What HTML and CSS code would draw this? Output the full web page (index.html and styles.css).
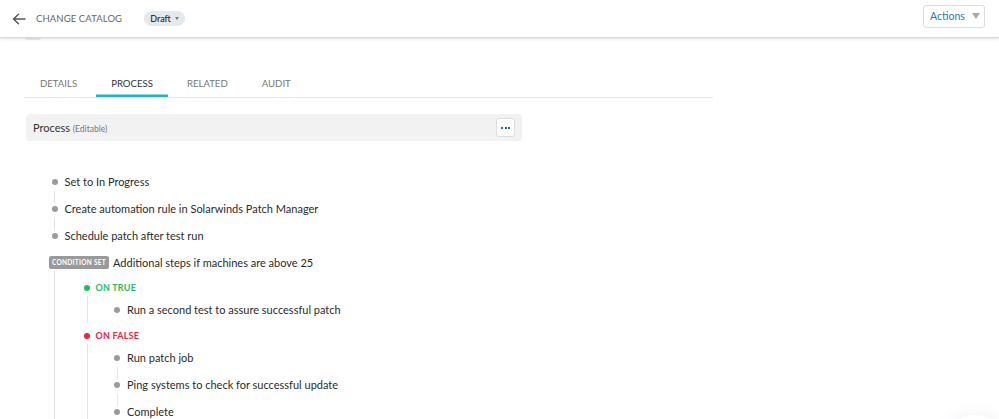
FILE: index.html
```html
<!DOCTYPE html>
<html>
<head>
<meta charset="utf-8">
<link rel="stylesheet" href="styles.css">
</head>
<body>
<header class="topbar">
  <div class="topbar-left">
    <svg class="back" width="14" height="12" viewBox="0 0 14 12"><path d="M13 6H1.8M6.5 1.2L1.5 6l5 4.8" fill="none" stroke="#555" stroke-width="1.4" stroke-linecap="round" stroke-linejoin="round"/></svg>
    <span class="title">CHANGE CATALOG</span>
    <span class="pill">Draft <span class="pill-caret"></span></span>
  </div>
  <button class="actions">Actions <span class="actions-caret"></span></button>
</header>
<div class="stub"></div>
<main class="content">
  <nav class="tabs">
    <span class="tab">DETAILS</span>
    <span class="tab active">PROCESS</span>
    <span class="tab">RELATED</span>
    <span class="tab">AUDIT</span>
  </nav>
  <div class="panel">
    <div class="panel-title">Process <span class="muted">(Editable)</span></div>
    <button class="more"><span></span><span></span><span></span></button>
  </div>
  <div class="flow">
    <div class="step"><span class="dot"></span>Set to In Progress</div>
    <div class="step"><span class="dot"></span>Create automation rule in Solarwinds Patch Manager</div>
    <div class="step"><span class="dot"></span>Schedule patch after test run</div>
    <div class="cond"><span class="badge">CONDITION SET</span>Additional steps if machines are above 25</div>
    <div class="branches">
      <div class="branch">
        <div class="branch-label true"><span class="bdot"></span>ON TRUE</div>
        <div class="children">
          <div class="step"><span class="dot"></span>Run a second test to assure successful patch</div>
        </div>
      </div>
      <div class="branch">
        <div class="branch-label false"><span class="bdot"></span>ON FALSE</div>
        <div class="children">
          <div class="step"><span class="dot"></span>Run patch job</div>
          <div class="step"><span class="dot"></span>Ping systems to check for successful update</div>
          <div class="step"><span class="dot"></span>Complete</div>
        </div>
      </div>
    </div>
  </div>
</main>
<div class="fab"></div>
</body>
</html>
```
FILE: styles.css
```css
html, body {
  margin: 0;
  padding: 0;
  background: #fff;
  font-family: Lato, "Open Sans", Arial, sans-serif;
  color: #333;
  overflow: hidden;
  height: 419px;
}
.topbar {
  height: 38px;
  box-sizing: border-box;
  display: flex;
  align-items: center;
  justify-content: space-between;
  padding: 0 14px 0 12px;
  border-bottom: 1px solid #d8d8d8;
  box-shadow: 0 1px 3px rgba(0,0,0,0.12);
  position: relative;
  z-index: 2;
}
.topbar-left {
  display: flex;
  align-items: center;
}
.back {
  display: block;
  margin-top: 1px;
}
.title {
  margin-left: 10px;
  font-size: 9.5px;
  color: #666;
  letter-spacing: 0.1px;
}
.pill {
  margin-left: 22px;
  height: 15px;
  padding: 0 6px 0 6px;
  border-radius: 8px;
  background: #e3e9ee;
  font-size: 9px;
  color: #333;
  display: inline-flex;
  align-items: center;
  font-weight: 600;
}
.pill-caret {
  width: 0;
  height: 0;
  margin-left: 4px;
  border-left: 2.5px solid transparent;
  border-right: 2.5px solid transparent;
  border-top: 3px solid #777;
}
.actions {
  height: 23px;
  width: 62px;
  padding: 0 0 0 6px;
  margin-top: -5px;
  background: #fff;
  border: 1px solid #dcdcdc;
  border-radius: 3px;
  font-family: inherit;
  font-size: 10.5px;
  color: #2a77b3;
  display: flex;
  align-items: center;
}
.actions-caret {
  width: 0;
  height: 0;
  margin-left: 7px;
  border-left: 4px solid transparent;
  border-right: 4px solid transparent;
  border-top: 6px solid #a9a9a9;
}
.stub {
  margin-left: 25px;
  width: 16px;
  height: 2px;
  background: #ececec;
  border-radius: 0 0 3px 3px;
}
.content {
  padding: 30px 0 0 25px;
  width: 688px;
}
.tabs {
  display: flex;
  gap: 4px;
  height: 27px;
  border-bottom: 1px solid #e6e6e6;
}
.tab {
  padding: 0 15px;
  font-size: 9.6px;
  color: #777;
  line-height: 27px;
  box-sizing: border-box;
  height: 27px;
}
.tab.active {
  color: #333;
  box-shadow: inset 0 -2.5px 0 #1cb3c8;
}
.panel {
  margin: 16px 0 0 1px;
  width: 496px;
  height: 27px;
  box-sizing: border-box;
  background: #f2f2f2;
  border-radius: 4px;
  display: flex;
  align-items: center;
  justify-content: space-between;
  padding: 0 7px;
}
.panel-title {
  font-size: 11px;
  color: #333;
}
.muted {
  font-size: 8.5px;
  color: #777;
}
.more {
  width: 19px;
  height: 19px;
  padding: 0;
  background: #fff;
  border: 1px solid #dddddd;
  border-radius: 3px;
  display: flex;
  align-items: center;
  justify-content: center;
  gap: 1.5px;
}
.more span {
  width: 2px;
  height: 2px;
  background: #1f6ea8;
}
.flow {
  margin-top: 27px;
  padding-left: 26px;
  font-size: 11px;
  color: #2b2b2b;
}
.step {
  position: relative;
  display: flex;
  align-items: center;
  height: 27px;
}
.step + .step::before {
  content: "";
  position: absolute;
  left: 3px;
  top: -4px;
  width: 1px;
  height: 12px;
  background: #e4e4e4;
}
.dot {
  width: 6px;
  height: 6px;
  border-radius: 50%;
  background: #9b9b9b;
  margin: 0 7px 0 0.5px;
  flex: none;
}
.cond {
  display: flex;
  align-items: center;
  height: 27px;
  margin-left: -2px;
}
.badge {
  background: #9a9a9a;
  color: #fff;
  font-size: 6.5px;
  font-weight: 700;
  letter-spacing: 0.3px;
  height: 13px;
  line-height: 13px;
  width: 60px;
  text-align: center;
  border-radius: 2px;
  margin-right: 4px;
}
.branches {
  margin-left: 3px;
  border-left: 1px solid #e4e4e4;
  padding: 9px 0 0 28px;
  display: flex;
  flex-direction: column;
  gap: 4px;
  margin-top: -6px;
  height: 200px;
}
.branch-label {
  display: flex;
  align-items: center;
  height: 17px;
  font-size: 9px;
  font-weight: 700;
  letter-spacing: 0.2px;
}
.branch-label.true { color: #1dbf5c; }
.branch-label.false { color: #f2233c; }
.bdot {
  width: 6px;
  height: 6px;
  border-radius: 50%;
  margin: 0 6px 0 0.5px;
  background: currentColor;
}
.children {
  margin-left: 3.5px;
  border-left: 1px solid #e4e4e4;
  padding-left: 26px;
}
.branch:last-child .children {
  height: 200px;
}
.fab {
  position: fixed;
  right: -8px;
  bottom: -60px;
  width: 64px;
  height: 64px;
  border-radius: 50%;
  background: #fff;
  box-shadow: 0 0 16px rgba(90,110,170,0.10);
}
```
